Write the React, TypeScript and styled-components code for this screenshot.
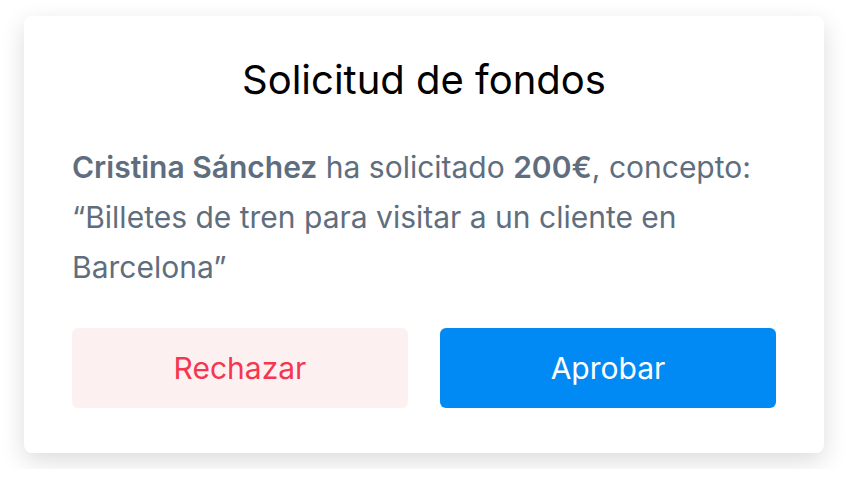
import { createGlobalStyle } from "styled-components";
import styled from "styled-components";

const GlobalStyle = createGlobalStyle`
  body {
    margin: 0;
    background: #ffffff;
    font-family: Inter, "Noto Sans", sans-serif;
  }
`;

const Page = styled.div`
  padding: 16px 24px;
`;

const Card = styled.div`
  width: 800px;
  box-sizing: border-box;
  background: #ffffff;
  border-radius: 8px;
  box-shadow: 0 8px 24px rgba(0, 0, 0, 0.14);
  padding: 40px 48px 45px;
`;

const Title = styled.h1`
  margin: 0;
  text-align: center;
  font-size: 40px;
  line-height: 48px;
  font-weight: 400;
  color: #000000;
`;

const Message = styled.p`
  margin: 38px 0 0;
  font-size: 30px;
  line-height: 50px;
  color: #5f6e7e;
  b {
    font-weight: 600;
  }
`;

const Actions = styled.div`
  display: grid;
  grid-template-columns: 1fr 1fr;
  gap: 32px;
  margin-top: 36px;
`;

const Button = styled.button<{ $primary?: boolean }>`
  height: 80px;
  border: none;
  border-radius: 6px;
  font-family: inherit;
  font-size: 30px;
  background: ${(p) => (p.$primary ? "#028af4" : "#fdf0f1")};
  color: ${(p) => (p.$primary ? "#ffffff" : "#f5364f")};
`;

export default function App() {
  return (
    <>
      <GlobalStyle />
      <Page>
        <Card>
          <Title>Solicitud de fondos</Title>
          <Message>
            <b>Cristina Sánchez</b> ha solicitado <b>200€</b>, concepto:
            “Billetes de tren para visitar a un cliente en Barcelona”
          </Message>
          <Actions>
            <Button>Rechazar</Button>
            <Button $primary>Aprobar</Button>
          </Actions>
        </Card>
      </Page>
    </>
  );
}
